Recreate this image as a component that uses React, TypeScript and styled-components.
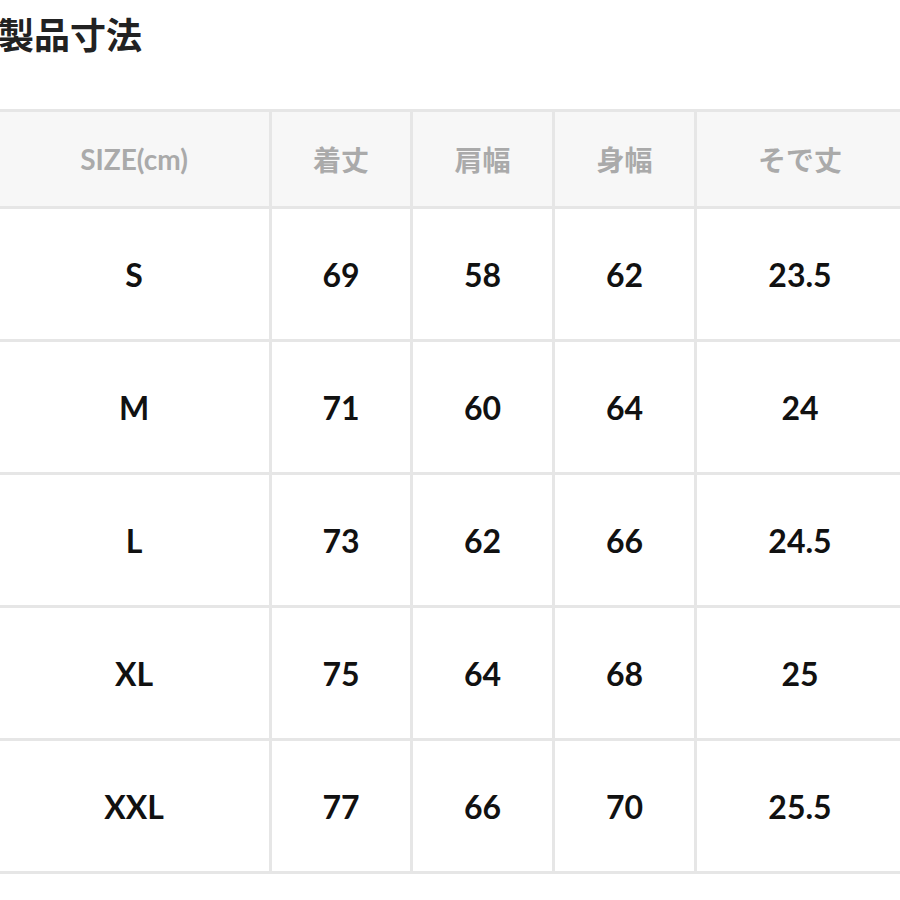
import React from 'react';
import styled, { createGlobalStyle } from 'styled-components';

const GlobalStyle = createGlobalStyle`
  html, body {
    margin: 0;
    padding: 0;
    background: #fff;
    overflow: hidden;
  }
  body {
    font-family: Lato, "Noto Sans CJK JP", sans-serif;
  }
`;

const Page = styled.div`
  width: 900px;
  height: 900px;
  overflow: hidden;
  background: #fff;
`;

const Title = styled.h2`
  margin: 0 0 0 -2px;
  padding-top: 14px;
  height: 109px;
  box-sizing: border-box;
  font-family: "Noto Sans CJK JP", sans-serif;
  font-size: 36px;
  line-height: 38px;
  font-weight: 700;
  color: #222;
`;

const Table = styled.div`
  display: grid;
  grid-template-columns: 270px 138px 139px 139px 206px;
  grid-template-rows: 94px repeat(5, 130px);
  gap: 3px;
  padding: 3px;
  margin-left: -4px;
  width: max-content;
  background: #e6e6e6;
`;

const Cell = styled.div<{ $head?: boolean }>`
  display: flex;
  align-items: center;
  justify-content: center;
  background: ${p => (p.$head ? '#f7f7f7' : '#fff')};
  color: ${p => (p.$head ? '#aaaaaa' : '#111')};
  font-family: Lato, "Noto Sans CJK JP", sans-serif;
  font-size: ${p => (p.$head ? '28px' : '32px')};
  font-weight: 700;
`;

const headers = ['SIZE(cm)', '着丈', '肩幅', '身幅', 'そで丈'];

const rows = [
  ['S', '69', '58', '62', '23.5'],
  ['M', '71', '60', '64', '24'],
  ['L', '73', '62', '66', '24.5'],
  ['XL', '75', '64', '68', '25'],
  ['XXL', '77', '66', '70', '25.5'],
];

const App: React.FC = () => {
  return (
    <Page>
      <GlobalStyle />
      <Title>製品寸法</Title>
      <Table>
        {headers.map(h => (
          <Cell key={h} $head>
            {h}
          </Cell>
        ))}
        {rows.map(r =>
          r.map((v, i) => <Cell key={r[0] + i}>{v}</Cell>)
        )}
      </Table>
    </Page>
  );
};

export default App;
